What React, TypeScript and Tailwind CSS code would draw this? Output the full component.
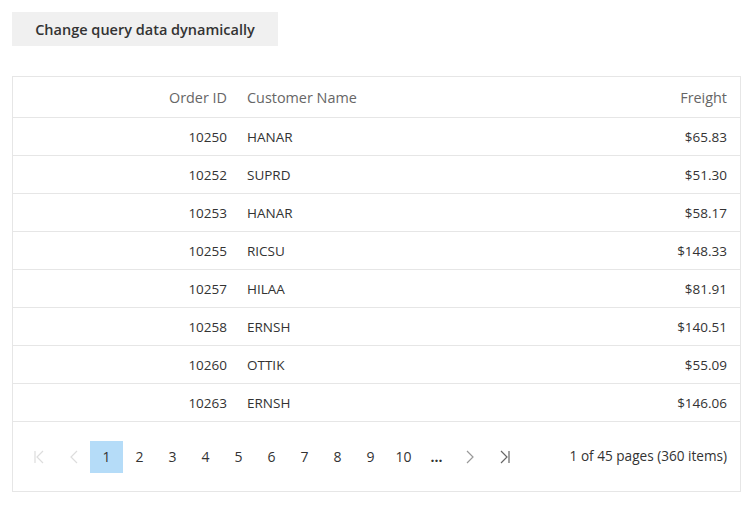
import React from "react";

const rows = [
  ["10250", "HANAR", "$65.83"],
  ["10252", "SUPRD", "$51.30"],
  ["10253", "HANAR", "$58.17"],
  ["10255", "RICSU", "$148.33"],
  ["10257", "HILAA", "$81.91"],
  ["10258", "ERNSH", "$140.51"],
  ["10260", "OTTIK", "$55.09"],
  ["10263", "ERNSH", "$146.06"],
];

export default function App() {
  return (
    <div className="w-[755px] h-[520px] bg-white text-[#333]" style={{ fontFamily: '"Open Sans", "Noto Sans", sans-serif' }}>
      <div className="pt-3 pl-3">
        <button className="h-[34px] w-[266px] bg-[#f0f0f0] pt-[2px] text-[14.5px] font-semibold text-[#333]">
          Change query data dynamically
        </button>
      </div>
      <div className="mt-[30px] ml-3 w-[729px] border border-[#e6e6e6]">
        <div className="flex h-[41px] items-center border-b border-[#e6e6e6] pt-[2px] text-[14.4px] text-[#666]">
          <div className="w-[226px] pr-[12px] text-right">Order ID</div>
          <div className="flex-1 pl-[8px]">Customer Name</div>
          <div className="w-[200px] pr-[13px] text-right">Freight</div>
        </div>
        {rows.map((r) => (
          <div key={r[0]} className="flex h-[38px] items-center border-b border-[#e6e6e6] pt-[1px] text-[13.5px]">
            <div className="w-[226px] pr-[12px] text-right">{r[0]}</div>
            <div className="flex-1 pl-[8px]">{r[1]}</div>
            <div className="w-[200px] pr-[13px] text-right">{r[2]}</div>
          </div>
        ))}
        <div className="flex h-[69px] items-center pl-[11px] pr-[13px] text-[14px]">
          <div className="flex h-[32px] w-[33px] items-center justify-center pr-[4px] text-[#ddd]">
            <svg width="12" height="14" viewBox="0 0 12 14" fill="none" stroke="currentColor" strokeWidth="1.2">
              <path d="M2 1v12M10 1L4 7l6 6" />
            </svg>
          </div>
          <div className="flex h-[32px] w-[33px] items-center justify-center text-[#ddd]">
            <svg width="8" height="14" viewBox="0 0 8 14" fill="none" stroke="currentColor" strokeWidth="1.2">
              <path d="M7 1L1 7l6 6" />
            </svg>
          </div>
          <div className="flex h-[32px] w-[33px] items-center justify-center bg-[#b5dcf8] text-[#333]">1</div>
          {["2", "3", "4", "5", "6", "7", "8", "9", "10"].map((p) => (
            <div key={p} className="flex h-[32px] w-[33px] items-center justify-center">{p}</div>
          ))}
          <div className="flex h-[32px] w-[33px] items-center justify-center font-bold">...</div>
          <div className="flex h-[32px] w-[33px] items-center justify-center text-[#999]">
            <svg width="8" height="14" viewBox="0 0 8 14" fill="none" stroke="currentColor" strokeWidth="1.2">
              <path d="M1 1l6 6-6 6" />
            </svg>
          </div>
          <div className="flex h-[32px] w-[33px] items-center justify-center pl-[4px] text-[#666]">
            <svg width="12" height="14" viewBox="0 0 12 14" fill="none" stroke="currentColor" strokeWidth="1.2">
              <path d="M2 1l6 6-6 6M10 1v12" />
            </svg>
          </div>
          <div className="flex-1 text-right text-[13.6px]">1 of 45 pages (360 items)</div>
        </div>
      </div>
    </div>
  );
}
